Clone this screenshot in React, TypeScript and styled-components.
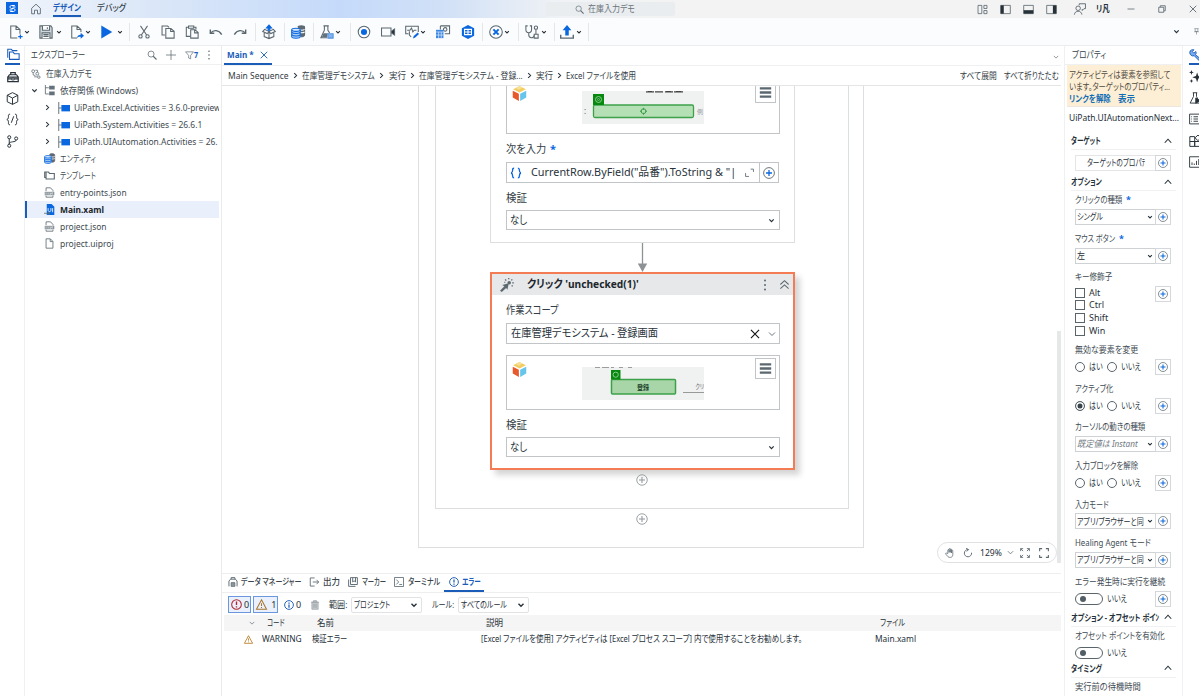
import React, { useLayoutEffect, useRef } from "react";
import styled, { createGlobalStyle, css } from "styled-components";

const BLUE = "#1a5cb8";
const BRIGHT = "#0a67df";
const INK = "#273139";
const GREY = "#5b6870";

const Global = createGlobalStyle`
  * { box-sizing: border-box; }
  html, body { margin: 0; padding: 0; overflow: hidden; }
  body {
    font-family: "Noto Sans", "Noto Sans CJK JP", sans-serif;
    font-feature-settings: "palt";
    font-size: 9px;
    line-height: 1.3;
    color: ${INK};
    background: #fff;
  }
  svg { display: block; flex: none; overflow: visible; }
`;

/* ---------- text that is condensed to its column ---------- */
const FitBox = styled.span<{ $w: number; $ml?: number }>`
  display: inline-block;
  flex: none;
  width: ${(p) => p.$w}px;
  margin-left: ${(p) => p.$ml ?? 0}px;
  white-space: nowrap;
`;
const FitInner = styled.span`
  display: inline-block;
  transform-origin: 0 50%;
`;
function Fit({ w, ml, children }: { w: number; ml?: number; children: React.ReactNode }) {
  const ref = useRef<HTMLSpanElement>(null);
  useLayoutEffect(() => {
    const el = ref.current;
    if (el) el.style.transform = `scaleX(${w / el.offsetWidth})`;
  }, [w, children]);
  return (
    <FitBox $w={w} $ml={ml}>
      <FitInner ref={ref}>{children}</FitInner>
    </FitBox>
  );
}

/* ---------- icons, drawn on a 16 unit grid ---------- */
type IconName = keyof typeof shapes;
const file = <path d="M3 1.2h6.2L13 5v9.8H3zM9 1.4V5.2h3.8" />;
const f = (c: string) => ({ fill: c, stroke: "none" });
const shapes = {
  home: <path d="M2.2 7 8 1.6 13.8 7v7.4H10V9.6H6v4.8H2.2z" />,
  newFile: <><path d="M9.5 14.8H2V1.2h6.2L12.5 5v5M8 1.4V5.2h4" /><path d="M13 10.8v5M10.5 13.3h5" stroke={BRIGHT} strokeWidth="1.4" /></>,
  save: <><path d="M1 1h12.5L15 3v12H1z" fill="#cfd8dd" /><path d="M4 1v5h8V1M3.5 15V9h9v6" fill="#fff" /><path d="M5 11h6M5 13h6M9.5 2.5v2" /></>,
  exportFile: <><path d="M8 14.8H2V1.2h6.2L12.5 5v3M8 1.4V5.2h4" /><path d="M8 15c.4-3 2-4 4.2-4V8.8l3.8 3.4-3.8 3.4v-2.2C10.500 13.200 9 13.800 8 15z" {...f(BRIGHT)} /></>,
  play: <path d="M1.500.6 14 8 1.500 15.400z" {...f(BRIGHT)} />,
  cut: <><path d="M4 1l7 10.500M12 1 5 11.500" /><circle cx="4" cy="13" r="1.900" /><circle cx="12" cy="13" r="1.900" /></>,
  copy: <><path d="M4.500 11.500H1.200V1.200h6.300l1.800 1.600" /><path d="M5.500 4h5.800L15 7.200V15H5.500zM11 4v3.500h4" /></>,
  paste: <><path d="M6 13H1.500V2.500H4M10 2.500h2.500V5" /><path d="M4 1.200h6v2.600H4z" /><path d="M6.500 5.500h5L15 8.500V15H6.500zM11 5.500V9h4" /></>,
  undo: <><path d="M1.500 5v4.500h4.500" strokeWidth="1.600" /><path d="M2 9C5 5.500 11 5 14.500 11" strokeWidth="1.600" /></>,
  redo: <><path d="M14.500 5v4.500h-4.500" strokeWidth="1.600" /><path d="M14 9C11 5.500 5 5 1.500 11" strokeWidth="1.600" /></>,
  publish: <><path d="M2.500 9v4.200L8 15.500l5.500-2.300V9M.8 7.500 3 5l5 2.300L13 5l2.200 2.500L10 9.800 8 7.500 6 9.800zM8 7.500v8" /><path d="M7 6V3.500H5L8 0l3 3.500H9V6z" fill={BRIGHT} stroke={BRIGHT} /></>,
  data: <><path d="M8 2.500C8 .5 15.500.5 15.500 2.500v9c0 1.500-3 2-4.500 1.800" fill="#5d6a72" /><path d="M9 5c2 1 5 1 6.500 0M9 8c2 1 5 1 6.500 0" stroke="#fff" /><path d="M.8 5.500v8c0 2.200 9.700 2.200 9.700 0v-8" fill="#a9ccf5" stroke={BRIGHT} /><ellipse cx="5.650" cy="5.500" rx="4.850" ry="1.800" fill="#d9e9fc" stroke={BRIGHT} /><path d="M1 8.500c1.500 1.700 8 1.700 9.500 0M1 11.300c1.500 1.700 8 1.700 9.500 0" stroke={BRIGHT} /></>,
  flask: <><path d="M4 1h6M5 1v5L1 14.500h7M9 1v5l2 3" /><path d="M4 9.500h5l-1 4.500H2z" {...f("#65727b")} /><path d="M9 10h6v5H9z" fill="#80b3f2" stroke="#5794df" /></>,
  beaker: <><path d="M5 1h6M6 1v5L1.500 14.800h13L10 6V1" /><path d="M9 8l6 3.500L9 15z" fill={INK} /></>,
  record: <><circle cx="8" cy="8" r="6.600" /><circle cx="8" cy="8" r="3.500" {...f(BRIGHT)} /></>,
  camera: <><path d="M.6 3.500h10.800v9H.6z" /><path d="m12 7 3.500-2.500v7L12 9z" fill={INK} /></>,
  tap: <><path d="M4 10H.8V1.500h14.400V8" /><path d="M2.500 6h3l2-2.500L9 8l1.500-2H13M5 7v4.500l2 2" /><path d="M9 15.500l1-3 4.500-4 1.500 1.700-4.300 4.200z" {...f(BRIGHT)} /></>,
  windows: <><path d="M5 1h10.500v9H10M5 1v4" /><circle cx="10.500" cy="5" r="2" /><path d="M0 5.500h8.500V15H0z" {...f("#3b87e4")} /><path d="M0 8h8.500M3 8v7M6 8v7M0 11.500h8.500" stroke="#cfe2fa" strokeWidth=".9" /></>,
  hex: <><path d="M8 0l7 3.800v8.400L8 16l-7-3.800V3.800z" {...f(BRIGHT)} /><path d="M4 5h8v6H4zM8 5v6M4 8h8" stroke="#fff" /></>,
  stop: <><circle cx="8" cy="8" r="7.200" /><path d="m5 5 6 6m0-6-6 6" stroke={BRIGHT} strokeWidth="2.300" /></>,
  steth: <><path d="M3 1H1v4c0 5 6.500 5 6.500 0V1h-2M4.300 9v2.500c0 4 6 4 6 .5" /><path d="M12.500 5v5M10.500 10.500h4.500V15h-4.500z" /><circle cx="12.500" cy="3" r="1.900" /></>,
  upload: <><path d="M.8 11v4h14.400v-4" strokeWidth="1.600" /><path d="M6 12V6H3l5-6 5 6h-3v6z" {...f(BRIGHT)} /></>,
  chev: <path d="m3 5.500 5 5 5-5" strokeWidth="2.800" />,
  chevThin: <path d="m2 5 6 6 6-6" strokeWidth="1.800" />,
  chevUp: <path d="m1.500 11.500 6.500-7 6.500 7" strokeWidth="2.200" />,
  right: <path d="m5 2.500 5.500 5.500L5 13.500" strokeWidth="2.400" />,
  pin: <path d="M3 1.500h10M5 1.500V8h6V1.500M2.500 8.500h11M8 8.500V15" />,
  folders: <><path d="M4 13V4.500h4l1.500 2H15V13z" /><path d="M2 11V1.500h4L7.500 3H13" /></>,
  toolbox: <><path d="M5 5V2.200h6V5M1.200 8l2-3h9.600l2 3M1 8.200h14v6H1zM1 10.500h5m4 0h5" strokeWidth="1.600" /><path d="M6.300 9.500h3.400v2.400H6.300z" /></>,
  cube: <path d="M8 .8 14.500 4v8L8 15.200 1.500 12V4zM1.500 4 8 7.500 14.500 4M8 7.500v7.700" />,
  braces: <path d="M5 1.500c-2 0-2 .8-2 2.500s0 3.500-2 4c2 .5 2 2.300 2 4s0 2.500 2 2.500M11 1.500c2 0 2 .8 2 2.500s0 3.500 2 4c-2 .5-2 2.300-2 4s0 2.500-2 2.500M9.500 4l-3 8" />,
  curly: <path d="M5.500 1.500c-2 0-2 .8-2 2.500s0 3.500-2 4c2 .5 2 2.300 2 4s0 2.500 2 2.500M10.500 1.500c2 0 2 .8 2 2.500s0 3.500 2 4c-2 .5-2 2.300-2 4s0 2.500-2 2.500" strokeWidth="1.800" />,
  branch: <><circle cx="4" cy="2.800" r="1.900" /><circle cx="12.500" cy="4.300" r="1.900" /><circle cx="4" cy="13.200" r="1.900" /><path d="M4 4.700v6.600M12.500 6.200c0 3-8.500 1.300-8.500 4.500" /></>,
  search: <><circle cx="6.500" cy="6.500" r="4.800" /><path d="m10 10 5.200 5.200" strokeWidth="1.800" /></>,
  plus: <path d="M8 0v16M0 8h16" />,
  filter: <path d="M1 1.500h14L10 8v6l-3.500-1.500V8z" />,
  dots: <><circle cx="8" cy="2" r="1.300" {...f(GREY)} /><circle cx="8" cy="8" r="1.300" {...f(GREY)} /><circle cx="8" cy="14" r="1.300" {...f(GREY)} /></>,
  process: <><circle cx="3.500" cy="3.500" r="2.300" /><circle cx="10" cy="7.500" r="2.300" /><circle cx="12.500" cy="13" r="2" /><path d="M7 2h3.500v3M3.500 6.500v3l3.500 1M5 12.500h5" /></>,
  deps: <><path d="M2 0v13h5M2 4h5" /><path d="M7.500 1h8v5.500h-8zM7.500 9.500h8V15h-8z" {...f("#65717a")} /></>,
  pkg: <><path d="M1 0v16M1 8h4" /><path d="M4.500 4H16v8.500H4.500z" {...f(BRIGHT)} /></>,
  folderGrey: <path d="M3 3.500V13h12V5H8L6.500 3H1v8h2" strokeWidth="1.600" />,
  json: <><path d="M3 6V1.200h6.500L13 5v1.500M3 12.500v2.300h10v-2.300" /><path d="M1 7h14v5H1z" {...f("#8a949a")} /><path d="M3 8v3M6 8v3M9 8v3l3-3v3" stroke="#fff" strokeWidth=".8" /></>,
  xaml: <><path d="M4 0h7l4 4v12H4z" {...f(BRIGHT)} /><path d="M6 6v3.500c0 2 4 2 4 0V6M12.500 6v6" stroke="#fff" /><path d="M0 13.500h8M6 11.500l2.500 2L6 15.500" stroke="#5f6d77" /></>,
  file,
  layout: <path d="M1.500 2H7v12H1.500zM10 2h4.500v4.500H10zM10 9.500h4.500V14H10z" />,
  panelL: <><path d="M1 2h14v12H1z" /><path d="M1 2h4.500v12H1z" {...f(INK)} /></>,
  panelB: <><path d="M1 2h14v12H1z" /><path d="M1 9h14v5H1z" {...f(INK)} /></>,
  panelR: <><path d="M1 2h14v12H1z" /><path d="M10 2h5v12h-5z" {...f(INK)} /></>,
  person: <><circle cx="5.500" cy="7" r="3" /><path d="M.5 15.500c.500-6 9.500-6 10 0M7 3V1h8.300v6.500h-2L11 10V8" /></>,
  min: <path d="M1 8h14" strokeWidth="1.600" />,
  restore: <path d="M1.500 4.500h10v10h-10zM4.500 4V1.500h10v10H12" strokeWidth="1.700" />,
  close: <path d="m1.500 1.500 13 13m0-13-13 13" strokeWidth="1.800" />,
  wrench: <path d="M1 4.500C1 1 5 .5 6.500 1L4.500 3.500l2 2L9 3.300c1 2 .5 3.500-.5 4.200L15.200 13l-2 2.200L7 9C4 10 1 8 1 4.500z" fill="#77aaf0" />,
  sparkle: <path d="M10 3l1.500 4.500L16 9l-4.500 1.500L10 15l-1.500-4.500L4 9l4.500-1.500zM3 0l.8 2.200L6 3l-2.200.8L3 6l-.8-2.200L0 3l2.200-.8zM3 11l.7 1.800 1.800.7-1.800.7L3 16l-.7-1.800-1.800-.7 1.800-.7z" {...f(INK)} />,
  list: <path d="M.8 1.500h14.400v13H.8zM3 5h1M6 5h6M3 8h1M6 8h6M3 11h1M6 11h6" />,
  grid: <path d="M1 2h6v6H1zM1 8h6v6H1zM7 8h6v6H7zM11 0l3.500 3.500L11 7 7.500 3.500z" />,
  chart: <path d="M.8 1h14.400v14H.8zM4 8.500V12M7 10v2M10 6.500V12M13 4v8" />,
  clipboard: <><path d="M5 3.500V1h6v2.500M1.500 15V6.500L4 3.500h8l2.500 3V15" strokeWidth="1.500" /><path d="M5 15V9h6v6z" fill="#8d979d" /></>,
  output: <path d="M9 1.500H2v13h7M6 8h9.500M12 4.500 15.500 8 12 11.500" strokeWidth="1.400" />,
  marker: <path d="M4 1h11v11H4zM1 4v11h11M7.500 1v7l2.200-2 2.300 2V1" strokeWidth="1.500" />,
  terminal: <path d="M.8.8h14.400v14.400H.8zM3.500 4 7.500 8l-4 4M8.500 12H13" strokeWidth="1.300" />,
  alert: <><circle cx="8" cy="8" r="7" strokeWidth="1.500" /><path d="M8 3.800v5M8 10.500v2" strokeWidth="2" /></>,
  info: <><circle cx="8" cy="8" r="7" strokeWidth="1.500" /><path d="M8 7.300v5M8 3.800v2" strokeWidth="2" /></>,
  warn: <path d="M8 1.200 15.300 14.800H.7zM8 6v4M8 11.500v1.500" strokeWidth="1.500" />,
  trash: <path d="M1.500 3.500h13M5.500 3.500V1h5v2.500M3 3.500h10v11.300H3zM6 6v6.500M8 6v6.500M10 6v6.500" fill="#c6cbce" />,
  plusCircle: <><circle cx="8" cy="8" r="7.200" stroke={GREY} /><path d="M8 4v8M4 8h8" stroke={BRIGHT} strokeWidth="1.700" /></>,
  addNode: <><circle cx="8" cy="8" r="7" /><path d="M8 4v8M4 8h8" strokeWidth="1.400" /></>,
  expand: <path d="M1 9v6h6M10 2h5v5" strokeWidth="1.500" />,
  brick: <><path d="M8 0l6.800 3.500L8 7 1.200 3.500z" {...f("#f3cd62")} /><path d="M.8 5 7.300 8.300V16L.8 12.300z" {...f("#e8592b")} /><path d="M15.200 5 8.700 8.300V16l6.500-3.700z" {...f("#65c5ea")} /><path d="M8 0 4 2l3.500 2L11 1.500z" {...f("#f8e09a")} /></>,
  menu: <path d="M1 3h14M1 8h14M1 13h14" strokeWidth="2.800" />,
  click: <><path d="M0 14.500 5 9.500 2.500 8 10 6 8.500 13.500 7 11.500 2 16z" {...f(GREY)} /><circle cx="10.500" cy="5.500" r="2" {...f(GREY)} /><path d="M6 1.500 7 3M10 0v1.500M14 1.500l-1 1.200M15.800 5.500H14M14.500 9.500l-1.200-1M5 5h1" strokeWidth="1.500" /></>,
  collapse: <path d="m2 8 6-5.500L14 8M2 14l6-5.500 6 5.500" strokeWidth="1.500" />,
  hand: <path d="M4.500 9V3.500c0-1.500 2-1.500 2 0V7 2c0-1.500 2-1.500 2 0v5-4.500c0-1.500 2-1.500 2 0V8 4.500c0-1.500 2-1.500 2 0V11c0 5-7 5-8.500 2L1 9.500c-.5-1.500 1-2 2-1z" />,
  rotate: <path d="M8.500 2.500a5.800 5.800 0 1 0 5.200 5M5 .5l4 2-3 3" strokeWidth="1.500" />,
  fit: <path d="M1 5V1h4M11 1h4v4M15 11v4h-4M5 15H1v-4M1 1l4 4M15 1l-4 4M15 15l-4-4M1 15l4-4" strokeWidth="1.400" />,
  full: <path d="M1 5V1h4M11 1h4v4M15 11v4h-4M5 15H1v-4" strokeWidth="1.700" />,
};
const Svg = styled.svg<{ $ml?: number }>`
  margin-left: ${(p) => p.$ml ?? 0}px;
`;
function Icon({ n, s = 12, c = GREY, ml }: { n: IconName; s?: number; c?: string; ml?: number }) {
  return (
    <Svg $ml={ml} width={s} height={s} viewBox="0 0 16 16" fill="none" stroke={c} strokeWidth={1.2}>
      {shapes[n]}
    </Svg>
  );
}

/* ---------- frame ---------- */
const Window = styled.div`
  width: 1200px;
  height: 696px;
  display: flex;
  flex-direction: column;
  overflow: hidden;
  background: #fff;
`;
const TitleBar = styled.header`
  height: 18px;
  flex: none;
  display: flex;
  align-items: center;
  background: linear-gradient(90deg, #f1f5fb 0, #dbe7f8 150px, #c5dafa 340px, #d0e0f7 440px, #f0f2f5 560px, #f3f3f3 680px);
`;
const Logo = styled.div`
  width: 12px;
  height: 12px;
  margin: -2px 0 0 6px;
  background: ${BRIGHT};
  display: grid;
  place-items: center;
`;
const MenuTab = styled.div<{ $on?: boolean; $ml: number }>`
  height: 16px;
  margin: 0 0 0 ${(p) => p.$ml}px;
  padding-top: 1px;
  font-weight: ${(p) => (p.$on ? 700 : 500)};
  color: ${(p) => (p.$on ? BLUE : "#333f47")};
  border-bottom: 2px solid ${(p) => (p.$on ? BLUE : "transparent")};
`;
const SearchBox = styled.div`
  display: flex;
  align-items: center;
  width: 129px;
  height: 14px;
  margin-left: 420px;
  padding-left: 29px;
  border-radius: 2px;
  color: #6b747b;
  background: #eaedf0;
`;
const Toolbar = styled.div`
  height: 28px;
  flex: none;
  display: flex;
  align-items: center;
  background: #fbfcfd;
  border-bottom: 1px solid #ebecee;
`;
const Sep = styled.i<{ $ml: number }>`
  width: 1px;
  height: 18px;
  flex: none;
  margin-left: ${(p) => p.$ml}px;
  background: #e4e6e8;
`;
const Grow = styled.span`flex: 1;`;
const Body = styled.div`
  flex: 1;
  min-height: 0;
  display: flex;
`;
const Rail = styled.nav<{ $right?: boolean }>`
  width: ${(p) => (p.$right ? 16 : 25)}px;
  flex: none;
  overflow: hidden;
  display: flex;
  flex-direction: column;
  border-right: ${(p) => (p.$right ? 0 : 1)}px solid #eff0f1;
`;
const RailItem = styled.div<{ $on?: boolean; $h?: number; $right?: boolean }>`
  height: ${(p) => p.$h ?? 21}px;
  width: ${(p) => (p.$right ? 16 : 15)}px;
  margin-left: ${(p) => (p.$right ? 6 : 5)}px;
  flex: none;
  display: flex;
  align-items: center;
  justify-content: ${(p) => (p.$right ? "flex-start" : "center")};
  border-bottom: 2px solid ${(p) => (p.$on ? BLUE : "transparent")};
`;

/* ---------- explorer ---------- */
const Explorer = styled.aside`
  width: 197px;
  flex: none;
  border-right: 1px solid #e9ebec;
`;
const PaneHead = styled.div`
  height: 19px;
  display: flex;
  align-items: center;
  padding-left: 6px;
  border-bottom: 1px solid #eff0f1;
  color: #333f48;
`;
const TreeRow = styled.div<{ $pl: number; $on?: boolean }>`
  height: 17px;
  width: 194px;
  display: flex;
  align-items: center;
  overflow: hidden;
  padding-left: ${(p) => p.$pl}px;
  color: #414b52;
  ${(p) =>
    p.$on &&
    css`
      background: #e9f0fb;
      box-shadow: inset 2px 0 ${BLUE};
      color: #1c252b;
      font-weight: 700;
    `}
`;

/* ---------- centre ---------- */
const Centre = styled.main`
  width: 839px;
  flex: none;
  display: flex;
  flex-direction: column;
`;
const DocTabs = styled.div`
  height: 20px;
  flex: none;
  display: flex;
  border-bottom: 1px solid #eff0f1;
  align-items: flex-start;
`;
const DocTab = styled.div`
  width: 48px;
  height: 19px;
  margin-left: 2px;
  padding-left: 3px;
  display: flex;
  align-items: center;
  font-weight: 700;
  color: ${BLUE};
  border-bottom: 2px solid ${BLUE};
`;
const Crumbs = styled.div`
  height: 20px;
  flex: none;
  display: flex;
  align-items: center;
  padding-right: 2px;
  border-bottom: 1px solid #e3e5e6;
  color: #333d45;
`;
const Canvas = styled.section`
  position: relative;
  height: 487px;
  flex: none;
  overflow: hidden;
`;
const Scope = styled.div<{ $x: number; $w: number; $b: number }>`
  position: absolute;
  left: ${(p) => p.$x}px;
  top: -4px;
  width: ${(p) => p.$w}px;
  height: ${(p) => p.$b + 4}px;
  border: 1px solid #dcdedf;
`;
const NodeCard = styled.article<{ $y: number; $h: number; $on?: boolean }>`
  position: absolute;
  left: 268px;
  top: ${(p) => p.$y}px;
  width: 305px;
  height: ${(p) => p.$h}px;
  padding: 0 ${(p) => (p.$on ? 14 : 15)}px;
  background: #fff;
  font-size: 11px;
  border: ${(p) => (p.$on ? "2px solid #f47c55" : "1px solid #dcdedf")};
  box-shadow: ${(p) => (p.$on ? "5px 5px 6px rgba(0,0,0,.17)" : "none")};
`;
const NodeHead = styled.div`
  height: 21px;
  margin: 0 -14px;
  padding: 0 3px 0 8px;
  display: flex;
  align-items: center;
  background: #e7e8ea;
  font-weight: 700;
  color: #20272c;
`;
const FieldLabel = styled.div<{ $h: number }>`
  height: ${(p) => p.$h}px;
  display: flex;
  align-items: center;
  padding-top: 3px;
  color: #343e46;
`;
const Field = styled.div<{ $h?: number; $w?: number }>`
  width: ${(p) => p.$w ?? 274}px;
  height: ${(p) => p.$h ?? 21}px;
  flex: none;
  display: flex;
  align-items: center;
  padding-left: 3px;
  border: 1px solid #c2c5c7;
  color: #29333b;
`;
const Preview = styled.div<{ $top?: number }>`
  width: 274px;
  height: 55px;
  margin-top: ${(p) => p.$top ?? 0}px;
  display: flex;
  align-items: flex-start;
  padding: 6px 0 0 5px;
  border: 1px solid #c2c5c7;
`;
const Thumb = styled.div`
  width: 122px;
  height: 33px;
  margin: 5px 51px 0 55px;
  flex: none;
  overflow: hidden;
  background: #f0f1f1;
`;
const MenuButton = styled.div`
  width: 21px;
  height: 21px;
  flex: none;
  margin-top: -4px;
  display: grid;
  place-items: center;
  border: 1px solid #c2c5c7;
`;
const Asterisk = styled.b`
  color: ${BRIGHT};
  margin-left: 4px;
`;
const Pos = styled.div<{ $x: number; $y: number }>`
  position: absolute;
  left: ${(p) => p.$x}px;
  top: ${(p) => p.$y}px;
`;
const ZoomPill = styled.div`
  position: absolute;
  left: 715px;
  top: 456px;
  width: 120px;
  height: 21px;
  display: flex;
  align-items: center;
  padding-left: 7px;
  border: 1px solid #dfe1e2;
  border-radius: 11px;
  background: #fff;
`;
const ScrollThumb = styled.div`
  position: absolute;
  right: 0;
  top: 245px;
  width: 4px;
  height: 232px;
  background: #e6e7e8;
`;
const Row = styled.div`display: flex;`;
const FieldPlus = styled.div`
  width: 22px;
  height: 21px;
  margin-left: -1px;
  display: grid;
  place-items: center;
  border: 1px solid #c2c5c7;
`;

/* ---------- bottom panel ---------- */
const Dock = styled.section`
  border-top: 1px solid #eceeef;
  flex: 1;
`;
const DockTabs = styled.div`
  height: 19px;
  display: flex;
  border-bottom: 1px solid #eceeef;
  padding-left: 1px;
`;
const DockTab = styled.div<{ $w: number; $on?: boolean }>`
  width: ${(p) => p.$w}px;
  height: 18px;
  flex: none;
  display: flex;
  align-items: center;
  padding-left: 5px;
  font-weight: ${(p) => (p.$on ? 700 : 500)};
  color: ${(p) => (p.$on ? BLUE : "#3a444b")};
  border-bottom: 2px solid ${(p) => (p.$on ? BLUE : "transparent")};
`;
const Filters = styled.div`
  height: 22px;
  display: flex;
  align-items: center;
  padding: 1px 0 0 6px;
`;
const Badge = styled.div<{ $w: number; $on?: boolean; $ml?: number }>`
  width: ${(p) => p.$w}px;
  height: 17px;
  margin-left: ${(p) => p.$ml ?? 0}px;
  display: flex;
  align-items: center;
  gap: 2px;
  padding-left: 2px;
  border: 1px solid ${(p) => (p.$on ? "#6c96dd" : "transparent")};
  background: ${(p) => (p.$on ? "#eaf1fc" : "none")};
`;
const Drop = styled.div<{ $w: number; $ml: number }>`
  width: ${(p) => p.$w}px;
  height: 16px;
  margin-left: ${(p) => p.$ml}px;
  display: flex;
  align-items: center;
  justify-content: space-between;
  padding: 0 3px 0 2px;
  border: 1px solid #e0e2e3;
  border-radius: 2px;
`;
const TableRow = styled.div<{ $head?: boolean }>`
  height: 16px;
  display: flex;
  align-items: center;
  margin-left: 2px;
  background: ${(p) => (p.$head ? "#f5f5f5" : "none")};
`;

/* ---------- properties ---------- */
const Props = styled.aside`
  width: 119px;
  margin-left: 3px;
  flex: none;
  border-left: 1px solid #eff0f1;
  border-right: 1px solid #eff0f1;
`;
const Banner = styled.div`
  height: 42px;
  margin: 0 1px 0 2px;
  padding: 4px 0 0 2px;
  background: #fdefd5;
  color: #4f4a41;
  border-bottom: 1px solid #ece6dc;
`;
const BannerLine = styled.div<{ $link?: boolean }>`
  display: flex;
  height: 12px;
  align-items: center;
  font-weight: ${(p) => (p.$link ? 700 : 400)};
  color: ${(p) => (p.$link ? "#0f6cb5" : "inherit")};
`;
const TypeName = styled.div`
  height: 22px;
  margin-bottom: 3px;
  padding-left: 4px;
  display: flex;
  align-items: center;
`;
const SectionHead = styled.div`
  height: 18px;
  width: 105px;
  margin-left: 6px;
  display: flex;
  align-items: center;
  justify-content: space-between;
  padding-right: 4px;
  border-bottom: 1px solid #f0f1f2;
  font-weight: 700;
`;
const Group = styled.div<{ $h?: number }>`
  height: ${(p) => p.$h ?? 38.6}px;
  width: 96px;
  margin-left: 10px;
`;
const PropLabel = styled.div`
  height: 18px;
  display: flex;
  align-items: center;
  white-space: nowrap;
  color: #414b53;
`;
const Control = styled.div`
  height: 16px;
  display: flex;
  align-items: center;
`;
const PropSelect = styled.div<{ $muted?: boolean }>`
  width: 80px;
  height: 16px;
  flex: none;
  display: flex;
  align-items: center;
  justify-content: space-between;
  padding: 0 2px 0 1px;
  border: 1px solid #cfd2d4;
  border-right: 0;
  font-style: ${(p) => (p.$muted ? "italic" : "normal")};
  color: ${(p) => (p.$muted ? "#70797f" : INK)};
`;
const TargetRow = styled(Control)`
  padding-top: 5px;
  height: 21px;
`;
const TargetButton = styled(PropSelect)`
  border-color: #e3e5e6;
  justify-content: center;
  padding: 0;
`;
const PlusCell = styled.div`
  width: 16px;
  height: 16px;
  flex: none;
  margin-left: auto;
  display: grid;
  place-items: center;
  border: 1px solid #d5d8da;
`;
const KeyRow = styled.div`display: flex;`;
const Check = styled.div`
  height: 12.7px;
  display: flex;
  align-items: center;
  gap: 4px;
`;
const Box = styled.i`
  width: 10px;
  height: 10px;
  border: 1px solid #59646b;
`;
const Radio = styled.i<{ $on?: boolean }>`
  width: 10px;
  height: 10px;
  flex: none;
  border-radius: 50%;
  border: 1px solid #59646b;
  background: ${(p) => (p.$on ? "#39444b" : "#fff")};
  box-shadow: inset 0 0 0 1.5px #fff;
`;
const Toggle = styled.i`
  width: 28px;
  height: 12px;
  border: 1px solid #59646b;
  border-radius: 6px;
  padding: 2px 4px;
  &::before {
    content: "";
    display: block;
    width: 6px;
    height: 6px;
    border-radius: 50%;
    background: #525d65;
  }
`;
const Gap = styled.span<{ $w?: number }>`width: ${(p) => p.$w ?? 4}px;`;
const Digit = styled.b`color: ${BLUE};`;
const DropMark = styled.div`
  width: 8px;
  padding-top: 8px;
`;

const Plus = () => <PlusCell><Icon n="plusCircle" s={10} /></PlusCell>;

function SelectProp({ label, w, star, value, vw, muted }: { label: string; w: number; star?: boolean; value: string; vw: number; muted?: boolean }) {
  return (
    <Group>
      <PropLabel><Fit w={w}>{label}</Fit>{star && <Asterisk>*</Asterisk>}</PropLabel>
      <Control>
        <PropSelect $muted={muted}><Fit w={vw}>{value}</Fit><Icon n="chev" s={6} c={INK} /></PropSelect>
        <Plus />
      </Control>
    </Group>
  );
}
function RadioProp({ label, w, yes }: { label: string; w: number; yes?: boolean }) {
  return (
    <Group>
      <PropLabel><Fit w={w}>{label}</Fit></PropLabel>
      <Control>
        <Radio $on={yes} /><Fit w={14} ml={4}>はい</Fit>
        <Gap /><Radio /><Fit w={20} ml={4}>いいえ</Fit>
        <Plus />
      </Control>
    </Group>
  );
}

type Tool = [IconName | "|", number];
const tools: Tool[] = [
  ["newFile", 9], ["chev", 1], ["save", 9], ["chev", 3], ["exportFile", 8], ["chev", 1], ["play", 9], ["chev", 3], ["|", 6],
  ["cut", 7], ["copy", 10], ["paste", 10], ["undo", 10], ["redo", 10], ["|", 8], ["publish", 6], ["|", 8], ["data", 6], ["|", 8],
  ["flask", 6], ["chev", 1], ["|", 9], ["record", 6], ["camera", 10], ["tap", 10], ["chev", 1], ["windows", 10], ["hex", 11], ["|", 7],
  ["stop", 6], ["chev", 1], ["|", 8], ["steth", 6], ["chev", 2], ["|", 7], ["upload", 5], ["chev", 2], ["|", 6],
];
const crumbs: [string, number][] = [
  ["Main Sequence", 61], ["在庫管理デモシステム", 73], ["実行", 17], ["在庫管理デモシステム - 登録...", 104], ["実行", 17], ["Excel ファイルを使用", 70],
];
const packages: [string, number][] = [
  ["UiPath.Excel.Activities = 3.6.0-preview", 147], ["UiPath.System.Activities = 26.6.1", 128], ["UiPath.UIAutomation.Activities = 26.", 144],
];
const files: [IconName, string, number, boolean?][] = [
  ["data", "エンティティ", 36], ["folderGrey", "テンプレート", 36], ["json", "entry-points.json", 67],
  ["xaml", "Main.xaml", 44, true], ["json", "project.json", 47], ["file", "project.uiproj", 54],
];

export default function App() {
  return (
    <Window>
      <Global />
      <TitleBar>
        <Logo>
          <svg width="9" height="9" viewBox="0 0 9 9" fill="none" stroke="#fff" strokeWidth="1">
            <path d="M6.800 1.500H3.500C1.500 1.500 1.500 4.500 3.500 4.500h2c2 0 2 3 0 3H2.200M4.500 3h3M1.500 6h3" />
          </svg>
        </Logo>
        <Icon n="home" s={12} ml={12} />
        <MenuTab $on $ml={11}><Fit w={28}>デザイン</Fit></MenuTab>
        <MenuTab $ml={16}><Fit w={29}>デバッグ</Fit></MenuTab>
        <SearchBox><Icon n="search" s={9} /><Fit w={47} ml={4}>在庫入力デモ</Fit></SearchBox>
        <Grow />
        <Icon n="layout" s={11} />
        <Icon n="panelL" s={11} ml={12} />
        <Icon n="panelB" s={11} ml={12} />
        <Icon n="panelR" s={11} ml={12} />
        <Icon n="person" s={12} ml={17} />
        <b><Fit w={14} ml={10}>リ凡</Fit></b>
        <Icon n="min" s={8} ml={17} />
        <Icon n="restore" s={8} ml={23} />
        <Icon n="close" s={8} ml={23} />
        <Gap $w={3} />
      </TitleBar>
      <Toolbar>
        {tools.map(([n, ml], i) =>
          n === "|" ? <Sep key={i} $ml={ml} /> : <Icon key={i} n={n} ml={ml} s={n === "chev" ? 6 : 14} c={n === "chev" ? INK : GREY} />
        )}
        <Grow />
        <Icon n="chev" s={7} c={INK} />
        <Icon n="pin" s={7} ml={13} />
      </Toolbar>
      <Body>
        <Rail>
          <RailItem $on $h={19}><Icon n="folders" s={14} c={BLUE} /></RailItem>
          <RailItem $h={25}><Icon n="toolbox" s={12} c={INK} /></RailItem>
          <RailItem $h={18}><Icon n="cube" s={13} c={INK} /></RailItem>
          <RailItem $h={24}><Icon n="braces" s={13} c={INK} /></RailItem>
          <RailItem $h={20}><Icon n="branch" s={13} c={INK} /></RailItem>
        </Rail>
        <Explorer>
          <PaneHead>
            <Fit w={54}>エクスプローラー</Fit>
            <Icon n="search" s={10} ml={62} />
            <Icon n="plus" s={10} ml={9} />
            <Icon n="filter" s={9} ml={9} />
            <Fit w={4} ml={0}><Digit>7</Digit></Fit>
            <Icon n="dots" s={10} ml={6} />
          </PaneHead>
          <TreeRow $pl={6}><Icon n="process" s={10} /><Fit w={46} ml={5}>在庫入力デモ</Fit></TreeRow>
          <TreeRow $pl={6}><Icon n="chev" s={7} c={INK} /><Icon n="deps" s={11} ml={6} /><Fit w={78} ml={5}>依存関係 (Windows)</Fit></TreeRow>
          {packages.map(([t, w]) => (
            <TreeRow key={t} $pl={19}><Icon n="right" s={7} c={INK} /><Icon n="pkg" s={12} ml={7} /><Fit w={w} ml={4}>{t}</Fit></TreeRow>
          ))}
          {files.map(([n, t, w, on]) => (
            <TreeRow key={t} $pl={19} $on={on}><Icon n={n} s={11} /><Fit w={w} ml={5}>{t}</Fit></TreeRow>
          ))}
        </Explorer>
        <Centre>
          <DocTabs>
            <DocTab><Fit w={27}>Main *</Fit><Icon n="close" s={8} c={BLUE} ml={6} /></DocTab>
            <Grow />
            <DropMark><Icon n="chevThin" s={6} /></DropMark>
          </DocTabs>
          <Crumbs>
            {crumbs.map(([t, w], i) => (
              <React.Fragment key={i}>
                {i > 0 && <Icon n="right" s={7} c={INK} ml={3} />}
                <Fit w={w} ml={i ? 3.3 : 6}>{t}</Fit>
              </React.Fragment>
            ))}
            <Grow />
            <Fit w={37}>すべて展開</Fit><Fit w={55} ml={7}>すべて折りたたむ</Fit>
          </Crumbs>
          <Canvas>
            <Scope $x={196} $w={446} $b={462} />
            <Scope $x={213} $w={414} $b={423} />
            <NodeCard $y={-8} $h={165}>
              <Preview>
                <Icon n="brick" s={15} />
                <Thumb>
                  <svg width="122" height="33" viewBox="0 0 122 33">
                    <path d="M64 .8h8M73 .8h8M83 .8h8M92 .8h9M66 0h4M84 0h5M94 0h5" stroke="#444" strokeWidth="1.300" />
                    <text x="2" y="23" fontSize="8" fill="#555">:</text>
                    <rect x="11.500" y="14" width="100" height="12.500" rx="1.500" fill="#b5dfb5" stroke="#3ca149" strokeWidth="1.300" />
                    <rect x="11" y="3" width="11" height="11" fill="#07890f" />
                    <circle cx="16.500" cy="8.500" r="3" fill="none" stroke="#8cca8f" /><circle cx="16.500" cy="8.500" r="1" fill="none" stroke="#8cca8f" strokeWidth=".7" />
                    <circle cx="61.500" cy="20.200" r="2.400" fill="none" stroke="#3ca149" /><path d="M58 20.200h2m3 0h2M61.500 16.800v2m0 3v2" stroke="#3ca149" />
                    <text x="115" y="23" fontSize="6" fill="#999">例</text>
                  </svg>
                </Thumb>
                <MenuButton><Icon n="menu" s={13} /></MenuButton>
              </Preview>
              <FieldLabel $h={28}><Fit w={40}>次を入力</Fit><Asterisk>*</Asterisk></FieldLabel>
              <Row>
                <Field $w={254}><Icon n="curly" s={12} c={BRIGHT} /><Fit w={205} ml={9}>CurrentRow.ByField("品番").ToString &amp; "|</Fit><Icon n="expand" s={9} ml={9} /></Field>
                <FieldPlus><Icon n="plusCircle" s={12} /></FieldPlus>
              </Row>
              <FieldLabel $h={27}><Fit w={21}>検証</Fit></FieldLabel>
              <Field $h={20}><Fit w={17}>なし</Fit><Grow /><Icon n="chev" s={7} c={INK} /><Gap /></Field>
            </NodeCard>
            <Pos $x={414.5} $y={157}>
              <svg width="11" height="29"><path d="M5.500 0v22" stroke="#8e9294" strokeWidth="1.300" /><path d="M.8 20.500h9.400L5.500 29z" fill="#8e9294" /></svg>
            </Pos>
            <NodeCard $y={186} $h={198} $on>
              <NodeHead>
                <Icon n="click" s={14} /><Fit w={112} ml={13}>クリック 'unchecked(1)'</Fit>
                <Grow /><Icon n="dots" s={12} /><Icon n="collapse" s={11} ml={8} />
              </NodeHead>
              <FieldLabel $h={28}><Fit w={53}>作業スコープ</Fit></FieldLabel>
              <Field>
                <Fit w={147} ml={1}>在庫管理デモシステム - 登録画面</Fit><Grow />
                <Icon n="close" s={10} c="#111" /><Icon n="chevThin" s={8} ml={8} /><Gap $w={3} />
              </Field>
              <Preview $top={11}>
                <Icon n="brick" s={15} />
                <Thumb>
                  <svg width="122" height="33" viewBox="0 0 122 33">
                    <path d="M13 .5h5M20 .5h7M29 .5h3M37 .5h4M46 .5h4" stroke="#888" strokeWidth=".8" />
                    <rect x="29.500" y="12.500" width="64" height="14.500" rx="1" fill="#a8d6a9" stroke="#3ca149" strokeWidth="1.500" />
                    <rect x="29" y="3" width="9.500" height="9.500" fill="#07890f" />
                    <circle cx="33.700" cy="7.700" r="2.600" fill="none" stroke="#8cca8f" />
                    <text x="55" y="22.500" fontSize="7" fontWeight="700" textLength="12" lengthAdjust="spacingAndGlyphs" fill="#20442b">登録</text>
                    <text x="113.500" y="22" fontSize="6.500" textLength="8.500" lengthAdjust="spacingAndGlyphs" fill="#666">クリ</text>
                    <path d="M101 25.500h21" stroke="#999" />
                  </svg>
                </Thumb>
                <MenuButton><Icon n="menu" s={13} /></MenuButton>
              </Preview>
              <FieldLabel $h={27}><Fit w={21}>検証</Fit></FieldLabel>
              <Field $h={20}><Fit w={17}>なし</Fit><Grow /><Icon n="chev" s={7} c={INK} /><Gap /></Field>
            </NodeCard>
            <Pos $x={414} $y={388}><Icon n="addNode" s={12} c="#92989b" /></Pos>
            <Pos $x={413.5} $y={427}><Icon n="addNode" s={12} c="#92989b" /></Pos>
            <ZoomPill>
              <Icon n="hand" s={10} /><Icon n="rotate" s={10} ml={8} /><Fit w={22} ml={7}>129%</Fit>
              <Icon n="chevThin" s={7} ml={5} /><Icon n="fit" s={10} ml={6} /><Icon n="full" s={10} ml={9} />
            </ZoomPill>
            <ScrollThumb />
          </Canvas>
          <Dock>
            <DockTabs>
              <DockTab $w={81}><Icon n="clipboard" s={10} /><Fit w={60} ml={3}>データ マネージャー</Fit></DockTab>
              <DockTab $w={39}><Icon n="output" s={10} /><Fit w={17} ml={4}>出力</Fit></DockTab>
              <DockTab $w={46}><Icon n="marker" s={10} /><Fit w={24} ml={4}>マーカー</Fit></DockTab>
              <DockTab $w={55}><Icon n="terminal" s={10} /><Fit w={32} ml={4}>ターミナル</Fit></DockTab>
              <DockTab $w={40} $on><Icon n="alert" s={10} c={BLUE} /><Fit w={19} ml={3}>エラー</Fit></DockTab>
            </DockTabs>
            <Filters>
              <Badge $w={23} $on><Icon n="alert" s={11} c="#b3242d" />0</Badge>
              <Badge $w={25} $on $ml={2}><Icon n="warn" s={11} c="#a9752c" />&nbsp;1</Badge>
              <Badge $w={24} $ml={3}><Icon n="info" s={10} c={BLUE} />0</Badge>
              <Icon n="trash" s={10} c="#9aa1a5" ml={5} />
              <Fit w={18} ml={9}>範囲:</Fit>
              <Drop $w={71} $ml={4}><Fit w={36}>プロジェクト</Fit><Icon n="chev" s={8} c={INK} /></Drop>
              <Fit w={22} ml={10}>ルール:</Fit>
              <Drop $w={71} $ml={4}><Fit w={46}>すべてのルール</Fit><Icon n="chev" s={8} c={INK} /></Drop>
            </Filters>
            <TableRow $head>
              <Icon n="chevThin" s={6} ml={25} /><Fit w={18} ml={12}>コード</Fit><Fit w={17} ml={32}>名前</Fit><Fit w={17} ml={152}>説明</Fit><Fit w={25} ml={377}>ファイル</Fit>
            </TableRow>
            <TableRow>
              <Icon n="warn" s={9} c="#bb7a22" ml={20} /><Fit w={40} ml={9}>WARNING</Fit><Fit w={35} ml={10}>検証エラー</Fit>
              <Fit w={321} ml={134}>[Excel ファイルを使用] アクティビティは [Excel プロセス スコープ] 内で使用することをお勧めします。</Fit><Fit w={41} ml={73}>Main.xaml</Fit>
            </TableRow>
          </Dock>
        </Centre>
        <Props>
          <PaneHead><Fit w={34} ml={1}>プロパティ</Fit></PaneHead>
          <Banner>
            <BannerLine><Fit w={101}>アクティビティは要素を参照して</Fit></BannerLine>
            <BannerLine><Fit w={101}>います。ターゲットのプロパティ...</Fit></BannerLine>
            <BannerLine $link><Fit w={42}>リンクを解除</Fit><Fit w={17} ml={7}>表示</Fit></BannerLine>
          </Banner>
          <TypeName><Fit w={110}>UiPath.UIAutomationNext...</Fit></TypeName>
          <SectionHead><Fit w={30}>ターゲット</Fit><Icon n="chevUp" s={8} c={INK} /></SectionHead>
          <Group $h={23}>
            <TargetRow><TargetButton><Fit w={58}>ターゲットのプロパﾃ</Fit></TargetButton><Plus /></TargetRow>
          </Group>
          <SectionHead><Fit w={31}>オプション</Fit><Icon n="chevUp" s={8} c={INK} /></SectionHead>
          <SelectProp label="クリックの種類" w={47} star value="シングル" vw={26} />
          <SelectProp label="マウス ボタン" w={40} star value="左" vw={8} />
          <Group $h={72.8}>
            <PropLabel><Fit w={37}>キー修飾子</Fit></PropLabel>
            <KeyRow>
              <div>{["Alt", "Ctrl", "Shift", "Win"].map((k) => <Check key={k}><Box />{k}</Check>)}</div>
              <Plus />
            </KeyRow>
          </Group>
          <RadioProp label="無効な要素を変更" w={63} />
          <RadioProp label="アクティブ化" w={38} yes />
          <SelectProp label="カーソルの動きの種類" w={70} value="既定値は Instant" vw={61} muted />
          <RadioProp label="入力ブロックを解除" w={63} />
          <SelectProp label="入力モード" w={34} value="アプリ/ブラウザーと同" vw={67} />
          <SelectProp label="Healing Agent モード" w={76} value="アプリ/ブラウザーと同" vw={67} />
          <Group $h={36.4}>
            <PropLabel><Fit w={90}>エラー発生時に実行を継続</Fit></PropLabel>
            <Control><Toggle /><Fit w={20} ml={4}>いいえ</Fit><Plus /></Control>
          </Group>
          <SectionHead><Fit w={88}>オプション - オフセット ポイﾝ</Fit><Icon n="chevUp" s={8} c={INK} /></SectionHead>
          <Group $h={33}>
            <PropLabel><Fit w={90}>オフセット ポイントを有効化</Fit></PropLabel>
            <Control><Toggle /><Fit w={20} ml={4}>いいえ</Fit></Control>
          </Group>
          <SectionHead><Fit w={31}>タイミング</Fit><Icon n="chevUp" s={8} c={INK} /></SectionHead>
          <Group><PropLabel><Fit w={66}>実行前の待機時間</Fit></PropLabel></Group>
        </Props>
        <Rail $right>
          <RailItem $right $on $h={19}><Icon n="wrench" s={12} c={BLUE} /></RailItem>
          <RailItem $right $h={24}><Icon n="sparkle" s={13} /></RailItem>
          <RailItem $right $h={20}><Icon n="beaker" s={12} c={INK} /></RailItem>
          <RailItem $right $h={22}><Icon n="list" s={12} c={INK} /></RailItem>
          <RailItem $right $h={22}><Icon n="grid" s={13} c={INK} /></RailItem>
          <RailItem $right $h={20}><Icon n="chart" s={12} c={INK} /></RailItem>
        </Rail>
      </Body>
    </Window>
  );
}
